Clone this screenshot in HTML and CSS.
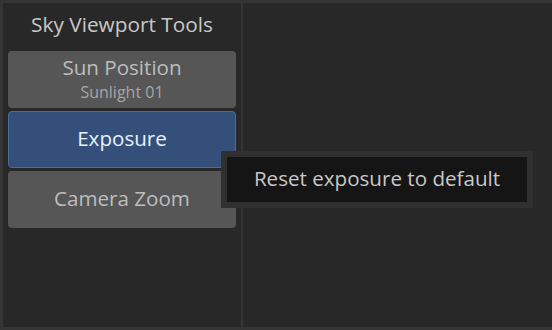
FILE: index.html
```html
<!DOCTYPE html>
<html lang="en">
<head>
    <meta charset="UTF-8">
    <title>Sky Viewport Tools</title>
    <link rel="stylesheet" href="styles.css">
</head>
<body>
    <div class="app">
        <div class="sidebar">
            <div class="title">Sky Viewport Tools</div>
            <div class="tool_list">
                <div class="tool">
                    <span class="name">Sun Position</span>
                    <span class="sub">Sunlight 01</span>
                </div>
                <div class="tool active">
                    <span class="name">Exposure</span>
                </div>
                <div class="tool">
                    <span class="name">Camera Zoom</span>
                </div>
            </div>
        </div>
        <div class="viewport"></div>

        <!-- tooltip over the exposure button -->
        <div class="tooltip"><span>Reset exposure to default</span></div>
    </div>
</body>
</html>
```

FILE: styles.css
```css
*{margin: 0;padding: 0;box-sizing: border-box;}
html,body{width: 552px;height: 330px;background: #353535;overflow: hidden;}
body{font-family: "Open Sans", "Noto Sans", sans-serif;color: #c6c6c6;}
.app{position: relative;display: flex;height: 330px;padding: 3px 0 3px 3px;}
.sidebar{width: 240px;border-right: 2px solid #353535;background: #282828;padding: 0 5px;}
.title{height: 48px;line-height: 42px;text-align: center;font-size: 20.8px;color: #c8c8c8;}
.tool_list{display: flex;flex-direction: column;gap: 3px;}
.tool{display: flex;flex-direction: column;justify-content: center;align-items: center;gap: 4px;height: 57px;padding-bottom: 3px;background: #565656;border-radius: 4px;color: #bdbdbd;}
.tool .name{font-size: 20.6px;line-height: 24px;}
.tool .sub{font-size: 16px;line-height: 18px;color: #a6a6a6;}
.tool.active{background: #34507a;border: 1px solid #4b6d9c;color: #e8f1ff;}
.viewport{flex: 1;background: #282828;}
.tooltip{position: absolute;left: 221px;top: 151px;width: 312px;height: 57px;padding: 6px;background: #303030;}
.tooltip span{display: block;height: 100%;line-height: 42px;background: #151515;text-align: center;font-size: 20.6px;color: #c8c8c8;}
```
